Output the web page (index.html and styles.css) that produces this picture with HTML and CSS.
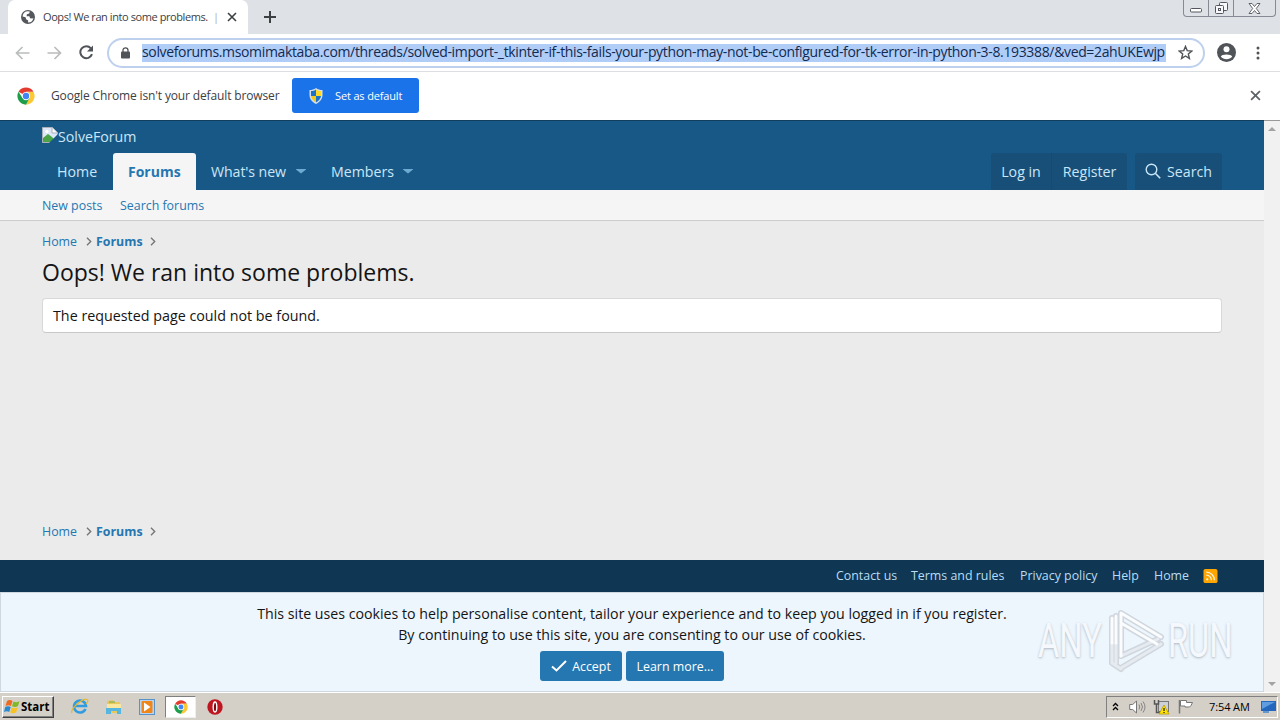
FILE: index.html
```html
<!DOCTYPE html>
<html lang="en">
<head>
  <meta charset="UTF-8" />
  <meta name="viewport" content="width=device-width, initial-scale=1.0"/>
  <title>Oops! We ran into some problems. | SolveForum</title>
  <link rel="stylesheet" href="styles.css">
</head>
<body>

<!-- Shared icons -->
<svg class="defs" width="0" height="0">
  <symbol id="chrome" viewBox="0 0 48 48">
    <circle cx="24" cy="24" r="23" fill="#fff"/>
    <path d="M24 24L4.1 12.5A23 23 0 0 1 43.9 12.5H24z" fill="#e33b2e"/>
    <path d="M24 13H44.2A23 23 0 0 1 24 47L33.5 29.5z" fill="#fcc934"/>
    <path d="M4.1 12.5A23 23 0 0 0 24 47L33.5 29.5L14.5 29.5z" fill="#1e9e4a"/>
    <circle cx="24" cy="24" r="11" fill="#fff"/>
    <circle cx="24" cy="24" r="8.5" fill="#4285f4"/>
  </symbol>
  <symbol id="cross" viewBox="0 0 10 10">
    <path d="M1 1l8 8M9 1l-8 8" fill="none" stroke="currentColor" stroke-width="1.6"/>
  </symbol>
  <symbol id="chevron" viewBox="0 0 6 9">
    <path d="M1 .8l3.7 3.7L1 8.2" fill="none" stroke="#777" stroke-width="1.4"/>
  </symbol>
</svg>

<div class="window">

  <!-- Tab strip -->
  <div class="tab-strip">
    <div class="tab">
      <svg class="globe" width="14" height="14" viewBox="0 0 14 14">
        <circle cx="7" cy="7" r="7" fill="#54585d"/>
        <path d="M6.3 1.2L8.8 1.5 8.2 3.4 5.9 4.2 5.6 6.2 8.4 6.3 9.1 8.3 11.5 8.6 12.4 8A5.6 5.6 0 0 1 7 12.6L7.2 10.4 5.1 9.2 4.6 7.2 1.6 6.4A5.6 5.6 0 0 1 6.3 1.2z" fill="#fff"/>
      </svg>
      <span class="tab-title">Oops! We ran into some problems.</span>
      <span class="tab-bar">|</span>
      <svg class="tab-close" width="10" height="10"><use href="#cross"/></svg>
    </div>
    <svg class="new-tab" width="12" height="12" viewBox="0 0 12 12"><path d="M6 0v12M0 6h12" stroke="#3c4043" stroke-width="2"/></svg>
    <div class="window-buttons">
      <div class="win-btn"><svg width="12" height="5" viewBox="0 0 12 5"><rect x=".5" y=".5" width="11" height="3.5" rx="1" fill="#fff" stroke="#53565e"/></svg></div>
      <div class="win-btn"><svg width="13" height="13" viewBox="0 0 13 13"><g fill="#f8f8fa" stroke="#53565e"><rect x="4.5" y=".5" width="8" height="8" rx="1"/><rect x=".5" y="3.5" width="8" height="8" rx="1"/><rect x="3.5" y="6.5" width="2" height="2"/></g></svg></div>
      <div class="win-btn close"><svg width="13" height="11" viewBox="0 0 13 11"><path d="M1 .5h3l2.500 3L9 .5h3L8.300 5.500 12 10.500H9L6.500 7.500 4 10.500H1L4.700 5.500z" fill="#fff" stroke="#53565e" stroke-width=".9"/></svg></div>
    </div>
  </div>

  <!-- Toolbar -->
  <div class="toolbar">
    <svg class="tool-icon back" width="15" height="14" viewBox="0 0 15 14"><path d="M14.500 7H1.500M7.500 1L1.500 7l6 6" fill="none" stroke="#babcbe" stroke-width="1.700"/></svg>
    <svg class="tool-icon forward" width="15" height="14" viewBox="0 0 15 14"><path d="M.5 7h13M7.500 1l6 6-6 6" fill="none" stroke="#babcbe" stroke-width="1.700"/></svg>
    <svg class="tool-icon reload" width="15" height="15" viewBox="0 0 15 15"><path d="M13 9.200A6 6 0 1 1 11.900 3.300" fill="none" stroke="#505357" stroke-width="2"/><path d="M14 .5V6.500H8z" fill="#505357"/></svg>
    <div class="address-bar">
      <svg class="lock" width="9" height="12" viewBox="0 0 9 12"><rect y="4.500" width="9" height="7" rx="1" fill="#505357"/><path d="M2 5V3.300a2.500 2.500 0 0 1 5 0V5" fill="none" stroke="#505357" stroke-width="1.300"/></svg>
      <span class="url">solveforums.msomimaktaba.com/threads/solved-import-_tkinter-if-this-fails-your-python-may-not-be-configured-for-tk-error-in-python-3-8.193388/&amp;ved=2ahUKEwjp</span>
      <svg class="star" width="15" height="15" viewBox="0 0 15 15"><path d="M7.500 1.400L9.200 5.600 13.800 6 10.300 9 11.400 13.400 7.500 11 3.600 13.400 4.700 9 1.200 6 5.800 5.600z" fill="none" stroke="#505357" stroke-width="1.400"/></svg>
    </div>
    <svg class="avatar" width="19" height="19" viewBox="0 0 19 19"><circle cx="9.500" cy="9.500" r="9.500" fill="#505357"/><circle cx="9.500" cy="6.300" r="3" fill="#fff"/><path d="M3.800 13.600C4.500 10.800 14.500 10.800 15.200 13.600 12.500 17.200 6.500 17.200 3.800 13.600z" fill="#fff"/></svg>
    <svg class="menu-dots" width="4" height="14" viewBox="0 0 4 14"><g fill="#505357"><circle cx="2" cy="2" r="1.500"/><circle cx="2" cy="7" r="1.500"/><circle cx="2" cy="12" r="1.500"/></g></svg>
  </div>

  <!-- Default browser bar -->
  <div class="info-bar">
    <svg width="18" height="18"><use href="#chrome"/></svg>
    <span class="info-text">Google Chrome isn't your default browser</span>
    <div class="default-button">
      <svg width="14" height="16" viewBox="0 0 14 16">
        <path d="M7 0C5 1.500 3 2 .5 2v5c0 4 2.500 7 6.500 9 4-2 6.500-5 6.500-9V2C11 2 9 1.500 7 0z" fill="#d5dfec"/>
        <path d="M7 1.500C5.500 2.500 4 3 2 3v5h5z" fill="#1b72c9"/><path d="M7 1.500C8.500 2.500 10 3 12 3v5H7z" fill="#ffd928"/>
        <path d="M2 8h5v6.500C4.500 13 2.300 11 2 8z" fill="#f5c91c"/><path d="M12 8H7v6.500C9.500 13 11.700 11 12 8z" fill="#1b72c9"/>
      </svg>
      <span>Set as default</span>
    </div>
    <svg class="info-close" width="11" height="11"><use href="#cross"/></svg>
  </div>

  <!-- Web page -->
  <div class="viewport">
    <div class="page">
      <header class="header">
        <div class="logo">
          <svg width="16" height="16" viewBox="0 0 16 16">
            <path d="M.5.5h10l5 5v4l-6 6h-9z" fill="#dce8f8" stroke="#a9b1bb"/>
            <path d="M1 11l5-4 4 3 2 2-3 3H1z" fill="#4ba546"/><path d="M10 1v5h5" fill="#fff" stroke="#a9b1bb"/>
            <path d="M16 7v9H7z" fill="#185886"/><circle cx="5" cy="4.500" r="1.700" fill="#fff"/>
          </svg>
          <span>SolveForum</span>
        </div>
        <nav class="nav">
          <a class="nav-link home">Home</a>
          <a class="nav-link active">Forums</a>
          <a class="nav-link whats-new">What's new <i class="caret"></i></a>
          <a class="nav-link members">Members <i class="caret"></i></a>
          <div class="nav-right">
            <a class="nav-button login">Log in</a>
            <a class="nav-button register">Register</a>
            <a class="nav-button search"><svg width="16" height="16" viewBox="0 0 16 16"><circle cx="6.500" cy="6.500" r="5.300" fill="none" stroke="#cbe6f8" stroke-width="1.400"/><path d="M10.500 10.500l4.700 4.700" stroke="#cbe6f8" stroke-width="1.600"/></svg>Search</a>
          </div>
        </nav>
      </header>
      <div class="sub-nav">
        <a class="new-posts">New posts</a>
        <a class="search-forums">Search forums</a>
      </div>

      <main class="content">
        <div class="breadcrumbs">
          <a>Home</a><svg width="6" height="9"><use href="#chevron"/></svg>
          <a class="current">Forums</a><svg width="6" height="9"><use href="#chevron"/></svg>
        </div>
        <h1>Oops! We ran into some problems.</h1>
        <div class="message"><span>The requested page could not be found.</span></div>
        <div class="breadcrumbs bottom">
          <a>Home</a><svg width="6" height="9"><use href="#chevron"/></svg>
          <a class="current">Forums</a><svg width="6" height="9"><use href="#chevron"/></svg>
        </div>
      </main>

      <footer class="footer">
        <a class="f-contact">Contact us</a>
        <a class="f-terms">Terms and rules</a>
        <a class="f-privacy">Privacy policy</a>
        <a class="f-help">Help</a>
        <a class="f-home">Home</a>
        <svg width="15" height="15" viewBox="0 0 15 15"><rect width="15" height="15" rx="2" fill="#ffa500"/><g fill="none" stroke="#fff5de" stroke-width="1.300"><path d="M3 6.500a5.500 5.500 0 0 1 5.500 5.500M3 3.300A8.700 8.700 0 0 1 11.700 12"/></g><circle cx="4" cy="11" r="1.200" fill="#fff5de"/></svg>
      </footer>

      <div class="cookies">
        <p class="line-one">This site uses cookies to help personalise content, tailor your experience and to keep you logged in if you register.</p>
        <p class="line-two">By continuing to use this site, you are consenting to our use of cookies.</p>
        <div class="cookie-buttons">
          <a class="button accept"><svg width="16" height="12" viewBox="0 0 16 12"><path d="M1 6.500l4.500 4L15 1" fill="none" stroke="#fff" stroke-width="2"/></svg>Accept</a>
          <a class="button learn">Learn more...</a>
        </div>

        <div class="watermark">
          <span class="any">ANY</span>
          <svg width="58" height="66" viewBox="0 0 58 66">
            <g fill="none" stroke-linejoin="round" stroke-linecap="round">
              <path d="M13 48V5L53 29M13 15l37 22M13 48L50 31M13 60L53 36M4 10v45l9 6M8 8v47" stroke="#d0d6dd" stroke-width="6"/>
              <path d="M13 48L50 31M13 60L53 36M4 35v20l9 6M8 35v20" stroke="#e6ebf1" stroke-width="3"/>
              <path d="M13 48V5L53 29M13 15l36 21M4 10v25M8 8v27" stroke="#fafcfe" stroke-width="3"/>
            </g>
          </svg>
          <span class="run">RUN</span>
        </div>
      </div>
    </div>
    <div class="scrollbar"><i class="arrow-up"></i><i class="arrow-down"></i></div>
  </div>

  <!-- Taskbar -->
  <div class="taskbar">
    <div class="start">
      <svg width="17" height="16" viewBox="0 0 17 16"><path d="M3 2c2-1.500 4-1 5.500 0L7 7C5.500 6 3.500 6 1.500 7z" fill="#ed6a21"/><path d="M9.500 2.500c2 1 4 1 6-.5L14 7c-2 1.200-4 1.200-6 .3z" fill="#80b928"/><path d="M1.200 8c2-1.200 4-1 5.500 0L5.200 13C3.500 12 2 12 0 13z" fill="#2789cf"/><path d="M7.700 8.500c2 1 4 1 6-.3l-1.500 5c-2 1.200-4 1.200-6 .3z" fill="#f8c322"/></svg>
      <span>Start</span>
    </div>
    <svg class="task-icon ie" width="18" height="17" viewBox="0 0 18 17"><path d="M14.500 11A6 6 0 1 1 15 8H4" fill="none" stroke="#2f9be0" stroke-width="2.600"/><path d="M1 15C-1 11 11 0 16 1.500 18 2.500 16 5 15 6" fill="none" stroke="#e1b832" stroke-width="1.200"/></svg>
    <svg class="task-icon explorer" width="17" height="17" viewBox="0 0 17 17"><path d="M2 3l6-1 1 2h6v11H2z" fill="#e9c75b"/><path d="M2 6h14v5H2z" fill="#f8e79d"/><path d="M1 10h15v6h-4v-3H6v3H1z" fill="#55b7df"/><path d="M4 4h6" stroke="#6aae61"/></svg>
    <svg class="task-icon player" width="16" height="16" viewBox="0 0 16 16"><rect x=".5" y=".5" width="15" height="15" fill="#b8d4ee" stroke="#5793c9"/><rect x="2.500" y="2" width="11" height="12" rx="1" fill="#f08519"/><path d="M5 3.500l6.500 4.500L5 12.500z" fill="#fff"/></svg>
    <div class="task-active"><svg width="14" height="14"><use href="#chrome"/></svg></div>
    <svg class="task-icon opera" width="16" height="16" viewBox="0 0 16 16"><circle cx="8" cy="8" r="7.700" fill="#bd1620"/><ellipse cx="8" cy="8" rx="1.800" ry="5" fill="#7f0a10" stroke="#fff" stroke-width="1.400"/></svg>

    <div class="tray">
      <svg class="t-up" width="7" height="9" viewBox="0 0 7 9"><path d="M1 4l2.500-2.500L6 4M1 8l2.500-2.500L6 8" fill="none" stroke="#000" stroke-width="1.300"/></svg>
      <svg class="t-sound" width="17" height="14" viewBox="0 0 17 14"><path d="M.7 4.500h3L7.500 1v12L3.700 9.500h-3z" fill="#fff" stroke="#777"/><path d="M10 4.500q1.500 2.500 0 5M12 3q3 4 0 8M14 1.500q4 5.500 0 11" fill="none" stroke="#858585"/></svg>
      <svg class="t-net" width="17" height="16" viewBox="0 0 17 16"><rect x="5.500" y="2.500" width="10" height="10" fill="#ccd1d7" stroke="#777"/><path d="M1.500 1v4h4V1M3.500 5v8.500H9" fill="none" stroke="#555" stroke-width="1.500"/><path d="M11 6l5 9H6z" fill="#ffe500" stroke="#bd9900" stroke-width=".8"/><path d="M11 9v3M11 13v1" stroke="#222" stroke-width="1.300"/></svg>
      <svg class="t-flag" width="16" height="15" viewBox="0 0 16 15"><path d="M1.500 1v13.500" stroke="#777" stroke-width="1.500"/><path d="M2.500 1.500h6v2h6l-1.500 3-1.500 1.500H7V7H2.500z" fill="#fff" stroke="#777"/></svg>
      <span class="clock">7:54 AM</span>
      <svg class="t-desktop" width="15" height="13" viewBox="0 0 15 13"><path d="M0 1h15v10H0z" fill="#2467bd"/><path d="M1 2h13L1 9z" fill="#609ce0"/><path d="M2 12h6" stroke="#4587cf" stroke-width="1.500"/></svg>
    </div>
  </div>

</div>

</body>
</html>
```
FILE: styles.css
```css
* {
  box-sizing: border-box;
}

body {
  margin: 0;
  font-family: "Open Sans", "Noto Sans", sans-serif;
  overflow: hidden;
}

.defs {
  display: block;
}

svg {
  flex: none;
}

span,
a {
  white-space: nowrap;
}

.window {
  width: 1280px;
  height: 720px;
  display: flex;
  flex-direction: column;
  background: #fff;
}

/* Browser */
.tab-strip {
  height: 34px;
  display: flex;
  background: #dee1e6;
  padding-left: 8px;
}

.tab {
  width: 240px;
  height: 34px;
  background: #fff;
  border-radius: 7px 7px 0 0;
  display: flex;
  align-items: center;
  padding-left: 13px;
  color: #3c4043;
  font-size: 11px;
}

.tab-title {
  width: 170px;
  margin: 0 0 2px 8px;
  letter-spacing: -0.42px;
}

.tab-bar {
  width: 7px;
  margin-bottom: 2px;
  color: #aaa;
}

.tab-close {
  margin-left: 7px;
  color: #3c4043;
}

.new-tab {
  margin: 11px 0 0 16px;
}

.window-buttons {
  width: 93px;
  height: 17px;
  margin: 0 4px 0 auto;
  display: flex;
  border: 1px solid #858a94;
  border-top: 0;
  border-radius: 0 0 4px 4px;
}

.win-btn {
  width: 25px;
  display: flex;
  align-items: center;
  justify-content: center;
  border-right: 1px solid #858a94;
}

.win-btn:first-child {
  padding-top: 5px;
}

.win-btn.close {
  flex: 1;
  border-right: 0;
}

.toolbar {
  height: 38px;
  display: flex;
  align-items: center;
  border-bottom: 1px solid #dcdee1;
}

.back {
  margin-left: 15px;
}

.forward {
  margin-left: 17px;
}

.reload {
  margin-left: 17px;
}

.address-bar {
  width: 1098px;
  height: 30px;
  margin-left: 13px;
  padding-left: 12px;
  border: 2px solid #bdd0ed;
  border-radius: 15px;
  display: flex;
  align-items: center;
}

.url {
  width: 1024px;
  height: 18px;
  margin-left: 12px;
  line-height: 16px;
  background: #b0cdf8;
  color: #102a50;
  font-size: 14px;
  letter-spacing: -0.345px;
}

.star {
  margin-left: 12px;
}

.avatar {
  margin-left: 12px;
}

.menu-dots {
  margin-left: 20px;
}

.info-bar {
  height: 48px;
  padding: 0 19px 1px 17px;
  display: flex;
  align-items: center;
}

.info-text {
  width: 229px;
  margin: 0 12px 1px 16px;
  color: #3c4043;
  font-size: 12px;
  letter-spacing: -0.14px;
}

.default-button {
  width: 127px;
  height: 35px;
  border-radius: 3px;
  display: flex;
  align-items: center;
  gap: 12px;
  padding-left: 17px;
  background: #1a73e8;
  color: #fff;
  font-size: 11px;
  letter-spacing: -0.15px;
}

.default-button span {
  margin-bottom: 1px;
}

.info-close {
  margin-left: auto;
  color: #5f6368;
}

/* Forum page */
.viewport {
  height: 572px;
  display: flex;
}

.page {
  width: 1264px;
  display: flex;
  flex-direction: column;
  background: #ebebeb;
}

.header {
  height: 70px;
  padding: 0 42px;
  background: #185886;
  border-top: 1px solid #123f60;
  color: #cbe6f8;
  font-size: 14.2px;
}

.logo {
  height: 32px;
  display: flex;
  align-items: center;
  padding-bottom: 2px;
}

.logo svg {
  margin-bottom: 2px;
}

.nav {
  display: flex;
  height: 37px;
}

.nav-link,
.nav-button {
  display: flex;
  align-items: center;
  padding-bottom: 1px;
}

.nav-link {
  padding-left: 15px;
}

.home {
  width: 71px;
}

.nav-link.active {
  width: 83px;
  background: #f5f5f5;
  color: #2577b1;
  font-size: 14px;
  font-weight: bold;
  border-radius: 3px 3px 0 0;
}

.whats-new {
  width: 120px;
  letter-spacing: -0.1px;
}

.members {
  width: 110px;
}

.caret {
  width: 10px;
  height: 5px;
  margin-left: auto;
  margin-right: 10px;
  background: #6eabd3;
  clip-path: polygon(0 0, 100% 0, 100% 20%, 50% 100%, 0 20%);
}

.members .caret {
  margin-right: 13px;
}

.nav-right {
  display: flex;
  margin-left: auto;
}

.nav-button {
  justify-content: center;
  background: #174f78;
}

.login {
  width: 61px;
  border-radius: 3px 0 0 0;
  border-right: 1px solid #164a70;
}

.register {
  width: 75px;
  border-radius: 0 3px 0 0;
}

.search {
  width: 87px;
  margin-left: 8px;
  gap: 6px;
  border-radius: 3px 3px 0 0;
}

.sub-nav {
  height: 31px;
  padding-left: 42px;
  display: flex;
  align-items: center;
  background: #f5f5f5;
  border-bottom: 1px solid #ccc;
  color: #2577b1;
  font-size: 12.4px;
}

.new-posts {
  width: 78px;
}

.content {
  height: 339px;
  padding: 10px 42px 0;
}

.breadcrumbs {
  height: 21px;
  display: flex;
  align-items: center;
  font-size: 12.4px;
  color: #2577b1;
}

.breadcrumbs a {
  padding-bottom: 1px;
}

.breadcrumbs a:first-child {
  width: 44px;
}

.breadcrumbs .current {
  width: 54px;
  margin-left: 4px;
  font-weight: bold;
}

h1 {
  height: 32px;
  margin: 5px 0 9px;
  font-size: 23px;
  line-height: 31px;
  font-weight: normal;
  color: #141414;
}

.message {
  height: 35px;
  padding: 0 0 1px 10px;
  display: flex;
  align-items: center;
  background: #fff;
  border: 1px solid #d8d8d8;
  border-bottom-color: #c8c8c8;
  border-radius: 4px;
  font-size: 14.3px;
  color: #141414;
}

.bottom {
  margin-top: 188px;
}

.footer {
  height: 32px;
  padding-right: 46px;
  display: flex;
  justify-content: flex-end;
  align-items: center;
  background: #0f3652;
  color: #b9ddf4;
  font-size: 12.4px;
}

.footer a,
.footer svg {
  padding-bottom: 1px;
}

.f-contact {
  width: 75px;
}

.f-terms {
  width: 109px;
}

.f-privacy {
  width: 92px;
}

.f-help {
  width: 42px;
}

.f-home {
  width: 49px;
}

.cookies {
  position: relative;
  height: 100px;
  padding-top: 10px;
  display: flex;
  flex-direction: column;
  align-items: center;
  background: #edf6fd;
  border: 1px solid #cfd8df;
  font-size: 14.2px;
  color: #141414;
}

.cookies p {
  height: 21px;
  margin: 0;
  line-height: 21px;
  white-space: nowrap;
}

.cookie-buttons {
  display: flex;
  gap: 4px;
  margin-top: 6px;
}

.button {
  height: 30px;
  display: flex;
  align-items: center;
  justify-content: center;
  background: #2577b1;
  color: #fff;
  border-radius: 3px;
  font-size: 12.4px;
}

.accept {
  width: 82px;
  gap: 5px;
}

.learn {
  width: 98px;
}

.watermark {
  position: absolute;
  left: 1037px;
  top: 15px;
  display: flex;
  align-items: center;
  font-family: "Roboto", sans-serif;
  font-size: 48px;
  line-height: 66px;
  color: #f5f8fc;
  text-shadow: 0 1px 3px #adb5be;
}

.watermark span {
  width: 64px;
  transform: scaleX(0.68);
  transform-origin: left;
}

.watermark svg {
  margin-left: 6px;
  margin-right: 2px;
}

.scrollbar {
  width: 16px;
  display: flex;
  flex-direction: column;
  align-items: center;
  justify-content: space-between;
  padding: 6px 0;
  background: #f1f1f1;
  border-top: 1px solid #999;
}

.arrow-up,
.arrow-down {
  width: 8px;
  height: 4px;
  background: #a3a3a3;
  clip-path: polygon(50% 0, 100% 100%, 0 100%);
}

.arrow-down {
  transform: rotate(180deg);
}

/* Taskbar */
.taskbar {
  height: 28px;
  display: flex;
  align-items: center;
  padding-left: 2px;
  background: #d4d0c8;
  border-top: 1px solid #fff;
}

.start {
  width: 52px;
  height: 22px;
  padding-left: 1px;
  display: flex;
  align-items: center;
  border: 1px solid #fff;
  border-right-color: #404040;
  border-bottom-color: #404040;
  box-shadow: inset -1px -1px #808080;
  font-size: 11.5px;
  font-weight: bold;
}

.ie {
  margin-left: 17px;
}

.explorer {
  margin-left: 16px;
}

.player {
  margin-left: 17px;
}

.task-active {
  width: 31px;
  height: 22px;
  margin-left: 10px;
  display: flex;
  align-items: center;
  justify-content: center;
  background: #fff;
  border: 1px solid #808080;
  border-right-color: #eee;
  border-bottom-color: #eee;
}

.opera {
  margin-left: 11px;
}

.tray {
  width: 172px;
  height: 22px;
  margin-left: auto;
  margin-right: 2px;
  display: flex;
  align-items: center;
  border: 1px solid #808080;
  border-right-color: #fff;
  border-bottom-color: #fff;
  font-size: 11px;
}

.t-up {
  margin-left: 5px;
}

.t-sound {
  margin-left: 10px;
}

.t-net {
  margin-left: 7px;
}

.t-flag {
  margin-left: 8px;
}

.clock {
  width: 42px;
  margin-left: 15px;
  letter-spacing: -0.1px;
}

.t-desktop {
  margin-left: 10px;
}
```
